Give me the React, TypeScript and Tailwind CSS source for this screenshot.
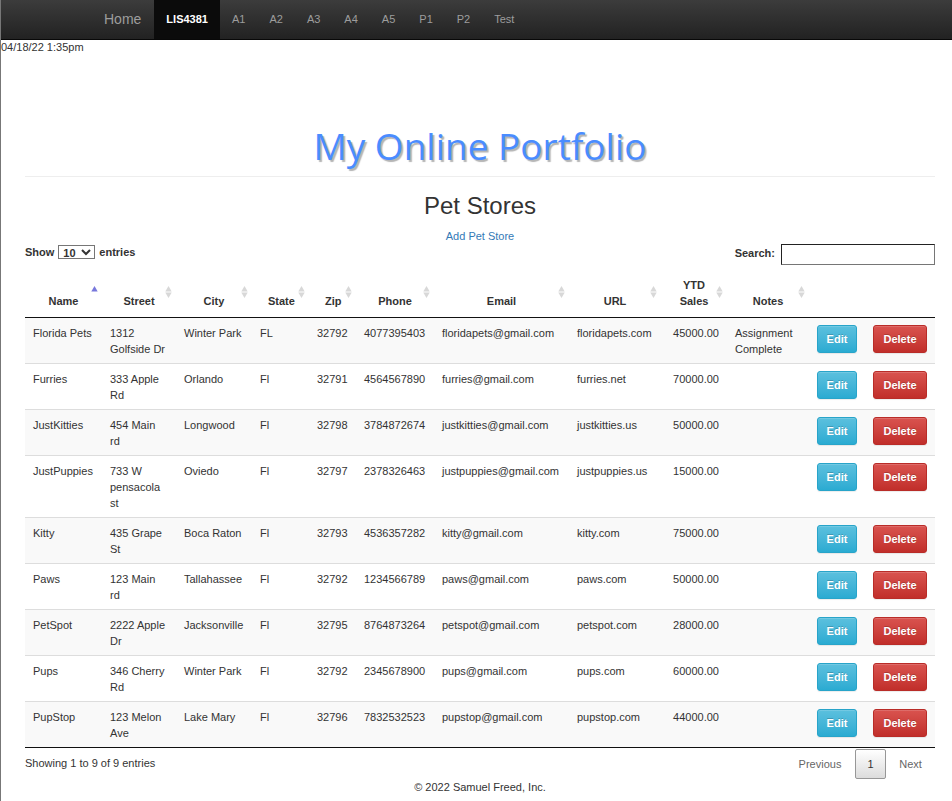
const navItems = ["A1", "A2", "A3", "A4", "A5", "P1", "P2", "Test"];

type Column = { label: string; width: string; sort?: "asc" | "none"; align?: string };

const columns: Column[] = [
  { label: "Name", width: "w-[77px]", sort: "asc" },
  { label: "Street", width: "w-[74px]", sort: "none" },
  { label: "City", width: "w-[76px]", sort: "none" },
  { label: "State", width: "w-[57px]", sort: "none" },
  { label: "Zip", width: "w-[47px]", sort: "none" },
  { label: "Phone", width: "w-[78px]", sort: "none" },
  { label: "Email", width: "w-[135px]", sort: "none" },
  { label: "URL", width: "w-[92px]", sort: "none" },
  { label: "YTD Sales", width: "w-[66px]", sort: "none", align: "text-right" },
  { label: "Notes", width: "w-[82px]", sort: "none" },
  { label: "", width: "w-[56px]" },
  { label: "", width: "w-[70px]" },
];

const stores: string[][] = [
  ["Florida Pets", "1312 Golfside Dr", "Winter Park", "FL", "32792", "4077395403", "floridapets@gmail.com", "floridapets.com", "45000.00", "Assignment Complete"],
  ["Furries", "333 Apple Rd", "Orlando", "Fl", "32791", "4564567890", "furries@gmail.com", "furries.net", "70000.00", ""],
  ["JustKitties", "454 Main rd", "Longwood", "Fl", "32798", "3784872674", "justkitties@gmail.com", "justkitties.us", "50000.00", ""],
  ["JustPuppies", "733 W pensacola st", "Oviedo", "Fl", "32797", "2378326463", "justpuppies@gmail.com", "justpuppies.us", "15000.00", ""],
  ["Kitty", "435 Grape St", "Boca Raton", "Fl", "32793", "4536357282", "kitty@gmail.com", "kitty.com", "75000.00", ""],
  ["Paws", "123 Main rd", "Tallahassee", "Fl", "32792", "1234566789", "paws@gmail.com", "paws.com", "50000.00", ""],
  ["PetSpot", "2222 Apple Dr", "Jacksonville", "Fl", "32795", "8764873264", "petspot@gmail.com", "petspot.com", "28000.00", ""],
  ["Pups", "346 Cherry Rd", "Winter Park", "Fl", "32792", "2345678900", "pups@gmail.com", "pups.com", "60000.00", ""],
  ["PupStop", "123 Melon Ave", "Lake Mary", "Fl", "32796", "7832532523", "pupstop@gmail.com", "pupstop.com", "44000.00", ""],
];

function SortIcon({ sort }: { sort: "asc" | "none" }) {
  return (
    <svg className="absolute right-1 top-[17px] h-3 w-[7px]" viewBox="0 0 7 12" aria-hidden="true">
      {sort === "asc" ? (
        <path d="M3.5 0 L6.7 5.5 H0.3 Z" fill="#7878dc" />
      ) : (
        <>
          <path d="M3.5 0 L6.7 5.5 H0.3 Z" fill="#d8d8d8" />
          <path d="M0.3 6.5 H6.7 L3.5 12 Z" fill="#d8d8d8" />
        </>
      )}
    </svg>
  );
}

function NavBar() {
  return (
    <nav className="flex h-10 items-stretch border-b border-[#080808] bg-linear-to-b from-[#3c3c3c] to-[#222] pl-[91px] text-[#9d9d9d]">
      <a href="#home" className="flex items-center pr-[13px] pl-3 pb-0.5 text-sm">
        Home
      </a>
      <a href="#lis4381" className="flex items-center bg-[#0b0b0b] px-3 pb-0.5 font-bold text-white">
        LIS4381
      </a>
      {navItems.map((item) => (
        <a key={item} href={"#" + item.toLowerCase()} className="flex items-center px-3 pb-0.5">
          {item}
        </a>
      ))}
    </nav>
  );
}

const actionButton =
  "block h-7 rounded-[3px] border font-bold text-white shadow-[inset_0_1px_0_rgba(255,255,255,0.15),0_1px_1px_rgba(0,0,0,0.075)] [text-shadow:0_-1px_0_rgba(0,0,0,0.2)]";

function StoreTable() {
  return (
    <table className="w-full table-fixed border-collapse border-b border-[#111]">
      <colgroup>
        {columns.map((c, i) => (
          <col key={i} className={c.width} />
        ))}
      </colgroup>
      <thead>
        <tr className="border-b border-[#111]">
          {columns.map((c, i) => (
            <th key={i} scope="col" className="relative px-4 py-2 text-center align-bottom font-bold">
              {c.label}
              {c.sort && <SortIcon sort={c.sort} />}
            </th>
          ))}
        </tr>
      </thead>
      <tbody>
        {stores.map((row) => (
          <tr key={row[0]} className="border-t border-[#ddd] odd:bg-[#f9f9f9] first:border-t-[#111]">
            {row.map((cell, i) => (
              <td key={i} className={"px-2 pt-[7px] pb-1.5 align-top " + (columns[i].align ?? "")}>
                {cell}
              </td>
            ))}
            <td className="px-2 pt-[7px] pb-1.5 align-top">
              <button type="button" className={actionButton + " w-10 border-[#28a4c9] bg-linear-to-b from-[#5bc0de] to-[#2aabd2]"}>
                Edit
              </button>
            </td>
            <td className="px-2 pt-[7px] pb-1.5 align-top">
              <button type="button" className={actionButton + " w-[54px] border-[#b92c28] bg-linear-to-b from-[#d9534f] to-[#c12e2a]"}>
                Delete
              </button>
            </td>
          </tr>
        ))}
      </tbody>
    </table>
  );
}

export default function App() {
  return (
    <div className="min-h-screen border-l border-[#777] bg-white font-['Liberation_Sans',Arial,sans-serif] text-[11px] leading-4 text-[#333]">
      <NavBar />
      <p className="leading-[14px]">04/18/22 1:35pm</p>
      <main className="pr-[17px] pl-6">
        <header className="mt-[66px] border-b border-[#eee] text-center">
          <h1 className="pb-1 font-['Trebuchet_MS','Open_Sans',sans-serif] text-[37px] leading-[52px] font-medium text-[#4a8cff] [text-shadow:2px_2px_1px_#b4b4b4]">
            My Online Portfolio
          </h1>
        </header>
        <h2 className="mt-[15px] text-center text-2xl leading-7">Pet Stores</h2>
        <div className="mt-2 text-center">
          <a href="#add" className="text-[#337ab7]">
            Add Pet Store
          </a>
        </div>
        <div className="flex items-start justify-between font-bold">
          <label className="flex items-center gap-1">
            Show
            <select className="h-[14px] w-[37px] rounded-none border border-[#767676] bg-white pl-0 font-bold leading-3">
              <option>10</option>
            </select>
            entries
          </label>
          <label className="flex items-start gap-1.5">
            <span className="leading-[18px]">Search:</span>
            <input type="search" className="h-[21px] w-[154px] border border-t-[#222] border-r-[#767676] border-b-[#767676] border-l-[#222] px-1 font-normal" />
          </label>
        </div>
        <div className="mt-1">
          <StoreTable />
        </div>
        <div className="flex items-start justify-between pt-px">
          <p className="pt-1.5">Showing 1 to 9 of 9 entries</p>
          <div className="flex text-[#666]">
            <button type="button" className="h-[30px] w-[70px]">
              Previous
            </button>
            <button type="button" className="h-[30px] w-[31px] rounded-[2px] border border-[#979797] bg-linear-to-b from-white to-[#dcdcdc] text-[#333]">
              1
            </button>
            <button type="button" className="h-[30px] w-[49px]">
              Next
            </button>
          </div>
        </div>
        <footer className="text-center">© 2022 Samuel Freed, Inc.</footer>
      </main>
    </div>
  );
}
